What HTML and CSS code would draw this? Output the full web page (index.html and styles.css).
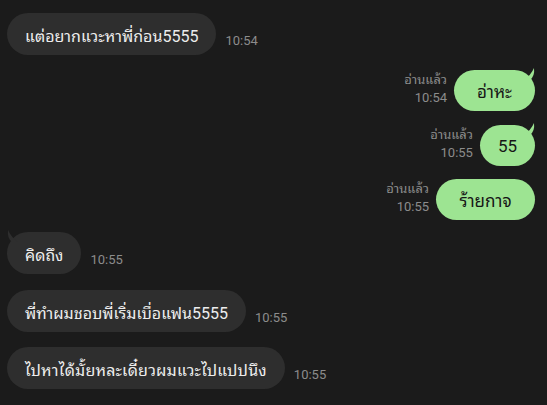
FILE: index.html
```html
<!DOCTYPE html>
<html lang="th">
<head>
<meta charset="utf-8">
<link rel="stylesheet" href="styles.css">
</head>
<body>
<div class="chat">
  <div class="row in r1">
    <div class="bubble dark">แต่อยากแวะหาพี่ก่อน5555</div>
    <div class="time">10:54</div>
  </div>
  <div class="row out r2">
    <div class="meta"><span>อ่านแล้ว</span><span>10:54</span></div>
    <div class="bubble green wide tail-r">อ่าหะ<svg class="tail" width="12" height="12" viewBox="0 0 12 12"><path d="M0 12 Q7 7 10 0 Q11 8 6 12 Z"/></svg></div>
  </div>
  <div class="row out r3">
    <div class="meta"><span>อ่านแล้ว</span><span>10:55</span></div>
    <div class="bubble green tail-r">55<svg class="tail" width="12" height="12" viewBox="0 0 12 12"><path d="M0 12 Q7 7 10 0 Q11 8 6 12 Z"/></svg></div>
  </div>
  <div class="row out r4">
    <div class="meta"><span>อ่านแล้ว</span><span>10:55</span></div>
    <div class="bubble green wider">ร้ายกาจ</div>
  </div>
  <div class="row in r5">
    <div class="bubble dark tail-l">คิดถึง<svg class="tail" width="12" height="12" viewBox="0 0 12 12"><path d="M12 12 Q5 7 2 0 Q1 8 6 12 Z"/></svg></div>
    <div class="time">10:55</div>
  </div>
  <div class="row in r6">
    <div class="bubble dark">พี่ทำผมชอบพี่เริ่มเบื่อแฟน5555</div>
    <div class="time">10:55</div>
  </div>
  <div class="row in r7">
    <div class="bubble dark loose">ไปหาได้มั้ยหละเดี๋ยวผมแวะไปแปปนึง</div>
    <div class="time">10:55</div>
  </div>
</div>
</body>
</html>
```
FILE: styles.css
```css
html, body {
  margin: 0;
  padding: 0;
  background: #1b1b1b;
}
body {
  width: 547px;
  height: 405px;
  overflow: hidden;
  font-family: Roboto, "Noto Sans Thai Looped", "Noto Sans Thai", sans-serif;
}
.chat {
  display: flex;
  flex-direction: column;
  padding: 13px 12px 0 7px;
}
.row {
  display: flex;
  align-items: flex-end;
}
.row.in { justify-content: flex-start; }
.row.out { justify-content: flex-end; }
.r2 { margin-top: 15px; }
.r3 { margin-top: 14px; }
.r4 { margin-top: 13px; }
.r5 { margin-top: 12px; }
.r6 { margin-top: 16px; }
.r7 { margin-top: 15px; }

.bubble {
  position: relative;
  height: 42px;
  box-sizing: border-box;
  display: flex;
  align-items: center;
  padding: 1px 18px 0;
  border-radius: 21px;
  font-size: 16px;
  white-space: nowrap;
}
.loose { letter-spacing: 0.2px; }
.dark {
  background: #2e2e2e;
  color: #ededed;
}
.green {
  background: #9de492;
  color: #161616;
  justify-content: center;
  height: 41px;
  border-radius: 21px;
  padding: 0 18px;
  font-size: 17px;
}
.green.wide { min-width: 81px; }
.green.wider { min-width: 99px; }
.tail {
  position: absolute;
  top: -2px;
}
.tail-r .tail { right: -1px; fill: #9de492; }
.tail-l .tail { left: -1px; fill: #2e2e2e; }

.time {
  color: #8c8c8c;
  font-size: 13px;
  margin: 0 0 7px 9px;
}
.meta {
  display: flex;
  flex-direction: column;
  align-items: flex-end;
  color: #8c8c8c;
  font-size: 13px;
  line-height: 18px;
  margin: 0 7px 4px 0;
}
```
